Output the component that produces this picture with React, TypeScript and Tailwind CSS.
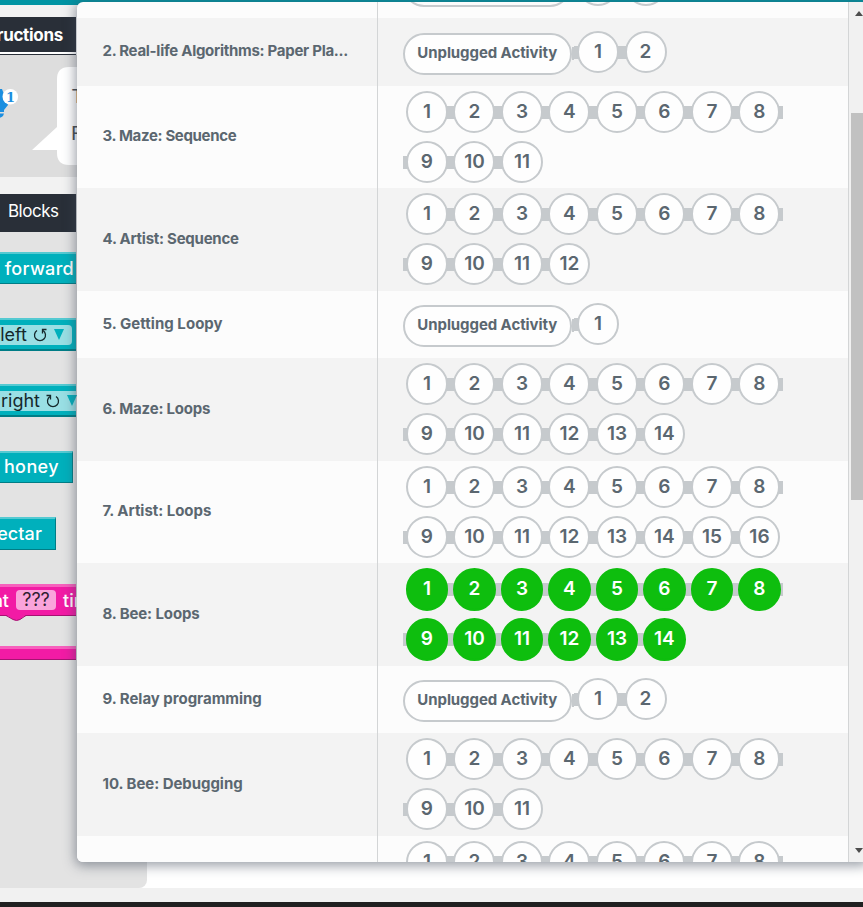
import React from "react";

type Lesson = { title: string; levels: number; h: string; track: string; unplugged?: boolean; done?: boolean };

const lessons: Lesson[] = [
  { title: "2. Real-life Algorithms: Paper Pla...", levels: 2, h: "h-[68px]", track: "tracking-[-0.28px]", unplugged: true },
  { title: "3. Maze: Sequence", levels: 11, h: "h-[102px]", track: "tracking-[-0.34px]" },
  { title: "4. Artist: Sequence", levels: 12, h: "h-[103px]", track: "tracking-[-0.25px]" },
  { title: "5. Getting Loopy", levels: 1, h: "h-[67px]", track: "tracking-[0.04px]", unplugged: true },
  { title: "6. Maze: Loops", levels: 14, h: "h-[103px]", track: "tracking-[-0.2px]" },
  { title: "7. Artist: Loops", levels: 16, h: "h-[102px]", track: "tracking-[-0.03px]" },
  { title: "8. Bee: Loops", levels: 14, h: "h-[103px]", track: "tracking-[-0.12px]", done: true },
  { title: "9. Relay programming", levels: 2, h: "h-[67px]", track: "tracking-[-0.03px]", unplugged: true },
  { title: "10. Bee: Debugging", levels: 11, h: "h-[103px]", track: "tracking-[-0.05px]" },
  { title: "", levels: 8, h: "h-[103px]", track: "" },
];

function Bubble({ n, left, right, done }: { n: number; left: boolean; right: boolean; done?: boolean }) {
  return (
    <div className="relative flex h-[50px] w-[47.5px] shrink-0 justify-center">
      <div className="absolute inset-x-0 top-[15px] flex h-[12.5px]">
        <div className={left ? "w-1/2 bg-[#c6cacd]" : "w-1/2"} />
        <div className={right ? "w-1/2 bg-[#c6cacd]" : "w-1/2"} />
      </div>
      <div
        className={
          "relative flex justify-center rounded-full border-2 pt-[6px] text-[19px] leading-[26px] font-semibold " +
          (done
            ? "h-[43px] w-[42.5px] border-[#0ebe0e] bg-[#0ebe0e] text-white"
            : "h-[42px] w-[42px] border-[#c6cacd] bg-[#fefefe] text-[#5b6770]")
        }
      >
        {n}
      </div>
    </div>
  );
}

function Progress({ lesson }: { lesson: Lesson }) {
  const nums = Array.from({ length: lesson.levels }, (_, i) => i + 1);
  if (lesson.unplugged) {
    return (
      <div className={"flex pl-[25px] " + (lesson.h === "h-[68px]" ? "pt-[13px]" : "pt-[12.4px]")}>
        <div className="mt-[2px] flex h-[41.5px] w-[168.5px] justify-center rounded-full border-2 border-[#c6cacd] bg-[#fefefe] text-[15px] leading-[35px] font-bold tracking-[-0.08px] whitespace-nowrap text-[#5b6770]">
          Unplugged Activity
        </div>
        <div className="mt-[16px] h-[13px] w-[2.75px] bg-[#c6cacd]" />
        {nums.map((n) => (
          <Bubble key={n} n={n} left right={n < nums.length} />
        ))}
      </div>
    );
  }
  return (
    <div className="flex w-[406px] flex-wrap content-start pt-[5px] pl-[25.2px]">
      {nums.map((n) => (
        <Bubble key={n} n={n} left={n > 1} right={n < nums.length || n === 8} done={lesson.done} />
      ))}
    </div>
  );
}

function Row({ lesson, shade }: { lesson: Lesson; shade: boolean }) {
  return (
    <div className={"flex shrink-0 overflow-hidden " + lesson.h + (shade ? " bg-[#f3f3f3]" : " bg-[#fcfcfc]")}>
      <div className="flex w-[301px] shrink-0 items-center border-r border-[#d3d5d6] pl-[25.5px] text-[15px] font-bold whitespace-nowrap text-[#5b6770]">
        <span className={"-mt-px " + lesson.track}>{lesson.title}</span>
      </div>
      <Progress lesson={lesson} />
    </div>
  );
}

const block =
  "flex shrink-0 items-center justify-end whitespace-nowrap border-t-2 border-b border-t-[#55cad2] border-b-[#007d86] bg-[#00b0bc] text-[18px] font-medium text-white";

const turnBlock =
  "flex h-[33px] w-[76px] shrink-0 items-center justify-end whitespace-nowrap border-t-2 border-b-2 border-t-[#55cad2] border-b-[#007d86] bg-[#00b0bc] pt-px";

function TurnIcon({ flip }: { flip?: boolean }) {
  return (
    <svg className={"mt-px ml-[6px] h-[14px] w-[14px] shrink-0" + (flip ? " -scale-x-100" : "")} viewBox="0 0 14 14" fill="none" stroke="#14282b" strokeWidth="1.300">
      <path d="M4 2.500A5.500 5.500 0 1 0 10 2.500" />
      <path d="M13.500 1.500H9.500V5.500" />
    </svg>
  );
}

function Workspace() {
  return (
    <div className="flex h-[907px] flex-col bg-white">
      <div className="h-[5px] shrink-0 bg-[#0094a3]" />
      <div className="h-3 shrink-0 bg-[#f2f2f2]" />
      <div className="flex h-[35px] w-[76px] shrink-0 items-center justify-end bg-[#292f38] pt-[2px] pr-[13px] text-[17px] font-bold tracking-[-0.3px] text-white">
        ructions
      </div>
      <div className="h-[2px] w-[76px] shrink-0 bg-white" />
      <div className="h-px w-[76px] shrink-0 bg-[#292f38]" />
      <div className="flex h-[122px] w-[90px] shrink-0 bg-[#dddddd]">
        <svg className="h-[122px] w-[90px]" viewBox="0 55 90 122">
          <path d="M-12 89H2L8 105L4 110V112H-12ZM-12 113.500H4L3 116Q1 118 -2 118H-12Z" fill="#1b8ee0" />
          <circle cx="10.300" cy="96.700" r="7.800" fill="#fff" />
          <text x="10.500" y="101.500" textAnchor="middle" fill="#1b8ee0" fontSize="13" fontWeight="700" fontFamily="DejaVu Serif">1</text>
          <path d="M90 67H69Q57 67 57 79V127L32 150H57V153Q57 165 69 165H90Z" fill="#fff" />
          <text x="72" y="103" fill="#454b52" fontSize="19" fontFamily="Lato">T</text>
          <text x="71" y="139.500" fill="#454b52" fontSize="19" fontFamily="Lato">F</text>
        </svg>
      </div>
      <div className="h-[17px] shrink-0 bg-[#f2f2f2]" />
      <div className="flex h-[694px] w-[147px] shrink-0 flex-col overflow-hidden rounded-br-[8px] bg-[#e3e3e3]">
        <div className="flex h-[38px] w-[76px] shrink-0 items-center bg-[#292f38] pb-[3px] pl-2 text-[17px] tracking-[-0.5px] text-white">Blocks</div>
        <div className="h-5 shrink-0" />
        <div className={block + " h-[32px] w-[76px] pr-[2px] tracking-[0.3px]"}>forward</div>
        <div className="h-[34px] shrink-0" />
        <div className={turnBlock + " pr-[4px]"}>
          <div className="flex h-5 w-[72px] shrink-0 items-center justify-end rounded-r-[4px] bg-[#99dfe4] pr-[8px] pb-px text-[18px] leading-5 text-[#14282b]">
            left
            <TurnIcon />
            <span className="ml-[7px] h-0 w-0 border-x-[5px] border-t-[11px] border-x-transparent border-t-[#00b0bc]" />
          </div>
        </div>
        <div className="h-[33px] shrink-0" />
        <div className={turnBlock}>
          <div className="flex h-5 w-[76px] shrink-0 items-center justify-end bg-[#99dfe4] pb-px text-[18px] leading-5 text-[#14282b]">
            right
            <TurnIcon flip />
            <span className="-mr-px ml-[7px] h-0 w-0 border-x-[5px] border-t-[11px] border-x-transparent border-t-[#00b0bc]" />
          </div>
        </div>
        <div className="h-[34px] shrink-0" />
        <div className={block + " h-[32px] w-[73px] border-r border-r-[#007d86] pr-[13px] pb-[2px] tracking-[0.4px]"}>honey</div>
        <div className="h-[34px] shrink-0" />
        <div className={block + " h-[33px] w-[56px] border-r border-r-[#007d86] pr-[13px] pb-[2px] tracking-[0.1px]"}>ectar</div>
        <div className="h-[34px] shrink-0" />
        <div className="flex h-[32px] w-[76px] shrink-0 items-center justify-end border-t-[3px] border-b border-t-[#f760bd] border-b-[#a61272] bg-[#f21ba5] pb-[2px] text-[18px] font-medium whitespace-nowrap text-white">
          <span>at</span>
          <span className="mx-[7px] h-5 w-10 shrink-0 rounded-[4px] bg-[#faa4db] text-center leading-5 font-normal text-[#302030]">???</span>
          <span className="w-[13px] shrink-0">tim</span>
        </div>
        <svg className="-mt-px h-[7px] w-[76px] shrink-0" viewBox="0 0 76 7">
          <path d="M6 0L13 4.500Q16.500 6.500 20 4.500L26 0Z" fill="#f21ba5" />
          <path d="M6 0.500L13 4.500Q16.500 6.500 20 4.500L26 0.500" fill="none" stroke="#a61272" />
        </svg>
        <div className="h-[24px] shrink-0" />
        <div className="h-[14px] w-[76px] shrink-0 border-t-[3px] border-b border-t-[#f760bd] border-b-[#a61272] bg-[#f21ba5]" />
      </div>
      <div className="h-[14px] shrink-0 bg-[#f1f1f1]" />
      <div className="h-[5px] shrink-0 bg-[#202020]" />
    </div>
  );
}

function Dialog() {
  return (
    <div className="absolute top-[2px] left-[77px] flex h-[860px] w-[790px] overflow-hidden rounded-[6px] bg-[#fcfcfc] shadow-[0_2px_12px_2px_rgba(60,70,85,0.5)]">
      <div className="flex w-[771px] shrink-0 flex-col overflow-hidden">
        <div className="flex h-[16px] shrink-0 overflow-hidden">
          <div className="flex w-[301px] border-r border-[#d3d5d6]" />
          <div className="flex pl-[25px]">
            <div className="-mt-[37px] h-[42px] w-[168px] rounded-full border-2 border-[#c6cacd]" />
            <div className="-mt-[38px] ml-[3.25px] flex">
              <div className="mx-[2.75px] h-[42px] w-[42px] rounded-full border-2 border-[#c6cacd]" />
              <div className="mx-[2.75px] h-[42px] w-[42px] rounded-full border-2 border-[#c6cacd]" />
            </div>
          </div>
        </div>
        {lessons.map((l, i) => (
          <Row key={i} lesson={l} shade={i % 2 === 0} />
        ))}
      </div>
      <div className="flex w-[19px] flex-col border-l border-[#d3d5d6] bg-[#f1f1f1] pl-[2px]">
        <div className="mt-[9px] ml-[4px] h-0 w-0 border-x-[4px] border-b-[5px] border-x-transparent border-b-[#4d4d4d]" />
        <div className="mt-[97px] h-[387px] w-[17px] bg-[#c1c1c1]" />
        <div className="mt-[348px] ml-[4px] h-0 w-0 border-x-[4px] border-t-[5px] border-x-transparent border-t-[#4d4d4d]" />
      </div>
    </div>
  );
}

export default function App() {
  return (
    <div className="relative h-[907px] w-[863px] overflow-hidden font-['Inter',sans-serif]">
      <Workspace />
      <Dialog />
    </div>
  );
}
